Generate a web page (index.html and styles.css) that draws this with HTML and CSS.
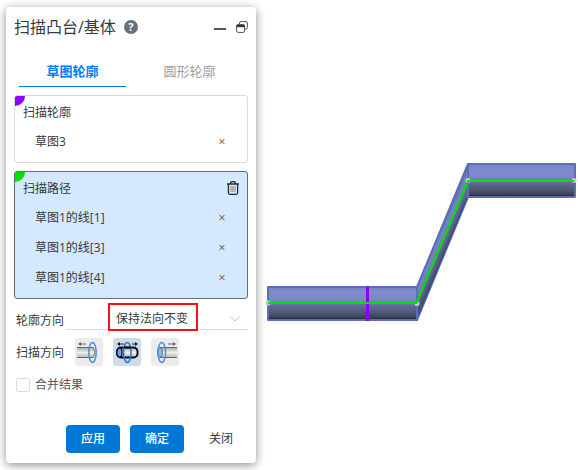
FILE: index.html
```html
<!DOCTYPE html>
<html lang="zh-CN">
<head>
  <meta charset="UTF-8">
  <title>扫描凸台/基体</title>
  <link rel="stylesheet" href="styles.css">
</head>
<body>
  <form class="panel">
    <header class="panel-header">
      <h1 class="panel-title">扫描凸台/基体</h1>
      <button type="button" class="icon-btn help" aria-label="帮助">?</button>
      <div class="window-actions">
        <button type="button" class="icon-btn" aria-label="最小化">
          <svg width="12" height="14" viewBox="0 0 12 14"><path d="M0 9H12" stroke="#555" stroke-width="2"/></svg>
        </button>
        <button type="button" class="icon-btn" aria-label="弹出">
          <svg width="12" height="12" viewBox="0 0 12 12" fill="none" stroke="#555">
            <path d="M3.5 3V2Q3.5 .6 5 .6H10Q11.4 .6 11.4 2V6.500Q11.4 8 10 8H9"/>
            <rect x=".6" y="3.600" width="8" height="7.800" rx="1.500"/>
            <path d="M.6 5H8.600" stroke="#333" stroke-width="2.400"/>
          </svg>
        </button>
      </div>
    </header>

    <div class="tabs">
      <button type="button" class="tab active">草图轮廓</button>
      <button type="button" class="tab">圆形轮廓</button>
    </div>

    <!-- Profile selection -->
    <section class="pick-box profile">
      <div class="pick-header"><h2 class="pick-title">扫描轮廓</h2></div>
      <ul class="pick-list">
        <li class="pick-item">草图3<button type="button" class="remove" aria-label="移除">×</button></li>
      </ul>
    </section>

    <!-- Path selection -->
    <section class="pick-box path active">
      <div class="pick-header">
        <h2 class="pick-title">扫描路径</h2>
        <button type="button" class="icon-btn" aria-label="清空">
          <svg width="12" height="14" viewBox="0 0 12 14" fill="none" stroke="#222b38" stroke-width="1.3">
            <path d="M0 3H12M3.6 3V1.8Q3.6 .7 4.7 .7H7.3Q8.4 .7 8.4 1.8V3M1.4 3V11.8Q1.4 13.3 2.9 13.3H9.1Q10.6 13.3 10.6 11.8V3"/>
            <path d="M4 5V11" stroke="#c79a5c"/><path d="M6 5V11" stroke="#6f9bd0"/><path d="M8 5V11" stroke="#c79a5c"/>
          </svg>
        </button>
      </div>
      <ul class="pick-list">
        <li class="pick-item">草图1的线[1]<button type="button" class="remove" aria-label="移除">×</button></li>
        <li class="pick-item">草图1的线[3]<button type="button" class="remove" aria-label="移除">×</button></li>
        <li class="pick-item">草图1的线[4]<button type="button" class="remove" aria-label="移除">×</button></li>
      </ul>
    </section>

    <div class="field">
      <label for="orientation">轮廓方向</label>
      <div class="select-wrap">
        <select id="orientation">
          <option>保持法向不变</option>
        </select>
        <svg class="chevron" width="10" height="6" viewBox="0 0 10 6"><path d="M.5 .5L5 5L9.5 .5" fill="none" stroke="#c0c4cc"/></svg>
        <span class="highlight"></span>
      </div>
    </div>

    <div class="field directions">
      <span>扫描方向</span>
      <div class="direction-group">
        <button type="button" class="direction" aria-label="反向">
          <svg width="28" height="28" viewBox="0 0 28 28" fill="none">
            <path d="M2 9.5H18.500Q21 14 18.500 19.500H2Z" fill="url(#tube)"/>
            <path d="M2 9.5H18M2 19.5H18" stroke="#666" stroke-width="1.200"/>
            <path d="M18.500 9.500Q21 14 18.500 19.500" stroke="#777"/>
            <ellipse cx="17.500" cy="14.500" rx="3.700" ry="10" stroke="#4b8fe0" stroke-width="1.500"/>
            <path d="M4 6H11" stroke="#777" stroke-width="1.200"/><path d="M3 6L6 4V8Z" fill="#666"/>
          </svg>
        </button>
        <button type="button" class="direction active" aria-label="双向">
          <svg width="28" height="28" viewBox="0 0 28 28" fill="none">
            <rect x="4" y="9.500" width="20.500" height="10" rx="4" fill="url(#tube)" stroke="#000" stroke-width="1.800"/>
            <ellipse cx="6.500" cy="14.500" rx="2.600" ry="4.700" fill="#64a8ef" stroke="#000" stroke-width="1.200"/>
            <ellipse cx="14.300" cy="14.500" rx="3.800" ry="10" stroke="#2c78cf" stroke-width="1.600"/>
            <path d="M11 9.500H18" stroke="#000" stroke-width="1.800"/>
            <path d="M5 6H11M19 6H24" stroke="#222"/>
            <path d="M4 6L7 4V8ZM25 6L22 4V8Z" fill="#111"/>
          </svg>
        </button>
        <button type="button" class="direction" aria-label="正向">
          <svg width="28" height="28" viewBox="0 0 28 28" fill="none">
            <path d="M9 9.500H26V19.500H9Z" fill="url(#tube)"/>
            <path d="M9 9.500H26M9 19.500H26" stroke="#666" stroke-width="1.200"/>
            <ellipse cx="9" cy="14.500" rx="2.400" ry="4.700" fill="#8bbdf0" stroke="#666"/>
            <ellipse cx="10.800" cy="14.500" rx="3.800" ry="10" stroke="#4b8fe0" stroke-width="1.500"/>
            <path d="M17 6H24" stroke="#777" stroke-width="1.200"/><path d="M25 6L22 4V8Z" fill="#666"/>
          </svg>
        </button>
      </div>
    </div>

    <div class="check-row">
      <input type="checkbox" id="merge">
      <label for="merge">合并结果</label>
    </div>

    <footer class="panel-footer">
      <button type="button" class="btn btn-primary">应用</button>
      <button type="button" class="btn btn-primary">确定</button>
      <button type="button" class="btn">关闭</button>
    </footer>
  </form>

  <!-- Model view -->
  <main class="viewport">
    <svg class="model" viewBox="0 0 322 470" role="img" aria-label="扫描预览">
      <defs>
        <linearGradient id="tube" x1="0" y1="0" x2="0" y2="1">
          <stop offset="0" stop-color="#aaa"/>
          <stop offset=".5" stop-color="#eee"/>
          <stop offset="1" stop-color="#bbb"/>
        </linearGradient>
        <linearGradient id="pipe" x1="0" y1="0" x2="0" y2="1">
          <stop offset="0" stop-color="#7482c4"/>
          <stop offset=".15" stop-color="#7f8bcc"/>
          <stop offset=".4" stop-color="#7b88c8"/>
          <stop offset=".55" stop-color="#626c9b"/>
          <stop offset=".8" stop-color="#50556e"/>
          <stop offset="1" stop-color="#30323e"/>
        </linearGradient>
        <linearGradient id="slope" gradientUnits="userSpaceOnUse" x1="174" y1="236" x2="199" y2="247">
          <stop offset="0" stop-color="#6c7cbb"/>
          <stop offset=".2" stop-color="#5668a8"/>
          <stop offset=".4" stop-color="#7887bd"/>
          <stop offset=".65" stop-color="#535b7c"/>
          <stop offset="1" stop-color="#262a3b"/>
        </linearGradient>
      </defs>
      <g stroke="#5a6fb9" stroke-width="2" stroke-linejoin="round">
        <path d="M161 287L212 164V197L161 320Z" fill="url(#slope)"/>
        <path d="M12 287H161V320H12Z" fill="url(#pipe)"/>
        <path d="M212 164H319V197H212Z" fill="url(#pipe)"/>
      </g>
      <g fill="none" stroke="#222a4a" opacity=".6">
        <path d="M13 318.500H160M213 195.500H318M162.500 315L211 198"/>
      </g>
      <path d="M111.500 286V321" stroke="#8b00ff" stroke-width="3"/>
      <g fill="#c8c8c8">
        <circle cx="12" cy="303" r="2.500"/><circle cx="161" cy="303.500" r="2.500"/>
        <circle cx="212" cy="180.500" r="2.500"/><circle cx="318" cy="180.500" r="2.500"/>
      </g>
      <path d="M12 303H160.500L212 181H318" fill="none" stroke="#00e010" stroke-width="2"/>
    </svg>
  </main>
</body>
</html>
```

FILE: styles.css
```css
* {
  margin: 0;
  padding: 0;
  box-sizing: border-box;
}

:root {
  --primary-color: #0078d7;
  --tab-color: #007bff;
  --text-color: #36383c;
  --muted-color: #a0a0a0;
  --border-color: #d9d9de;
  --active-bg: #d4e8ff;
}

body {
  display: flex;
  align-items: flex-start;
  background: #fff;
  color: var(--text-color);
  font-family: "Open Sans", "Noto Sans CJK SC", sans-serif;
  font-size: 12px;
  line-height: 18px;
}

button,
select {
  border: none;
  background: none;
  color: inherit;
  font: inherit;
  cursor: pointer;
}

svg {
  display: block;
}

/* Panel */
.panel {
  flex: none;
  width: 250px;
  margin: 7px 0 7px 6px;
  padding: 0 8px 10px;
  border-radius: 4px;
  background: #fff;
  box-shadow: 0 2px 10px rgba(0, 0, 0, 0.45);
}

.panel-header {
  display: flex;
  align-items: center;
  height: 40px;
}

.panel-title {
  font-size: 16px;
  font-weight: 400;
  line-height: 24px;
}

.icon-btn {
  display: flex;
  align-items: center;
  justify-content: center;
}

.help {
  width: 14px;
  height: 14px;
  margin-left: 8px;
  border-radius: 50%;
  background: #66717c;
  color: #fff;
  font-size: 11px;
  font-weight: 700;
  line-height: 14px;
}

.window-actions {
  display: flex;
  align-items: center;
  gap: 10px;
  margin-left: auto;
}

/* Tabs */
.tabs {
  display: flex;
  margin: 9px 0 8px;
}

.tab {
  flex: 1;
  height: 31px;
  margin: 0 5px;
  border-bottom: 1px solid transparent;
  color: var(--muted-color);
  font-size: 13px;
}

.tab.active {
  border-bottom: 1px solid var(--tab-color);
  color: var(--tab-color);
  font-weight: 700;
}

/* Selection boxes */
.pick-box {
  position: relative;
  margin-bottom: 8px;
  padding: 1px 8px 5px;
  border: 1px solid var(--border-color);
  border-radius: 3px;
  overflow: hidden;
}

.pick-box::before {
  content: "";
  position: absolute;
  top: 0;
  left: 0;
  width: 10px;
  height: 10px;
  border-bottom-right-radius: 10px;
}

.profile::before {
  background: #8b00ff;
}

.path::before {
  background: #00e000;
}

.pick-box.active {
  margin-bottom: 0;
  border-color: #666c75;
  background: var(--active-bg);
}

.pick-header,
.pick-item {
  display: flex;
  align-items: center;
  justify-content: space-between;
  height: 30px;
}

.pick-title {
  padding-top: 2px;
  font-size: 12px;
  font-weight: 400;
}

.pick-list {
  list-style: none;
}

.pick-item {
  padding: 0 12px;
}

.remove {
  width: 10px;
  color: #55585e;
}

/* Fields */
.field {
  display: flex;
  align-items: flex-end;
  padding-left: 2px;
}

.field > label,
.field > span {
  width: 50px;
}

.field > span {
  padding-top: 2px;
}

.select-wrap {
  position: relative;
  flex: 1;
}

.select-wrap select {
  display: block;
  width: 100%;
  height: 31px;
  padding: 10px 10px 0 0;
  border-bottom: 1px solid #d8dae4;
  appearance: none;
  text-align: center;
  text-align-last: center;
}

.chevron {
  position: absolute;
  top: 17px;
  right: 8px;
  pointer-events: none;
}

.highlight {
  position: absolute;
  top: 4px;
  left: 42px;
  width: 90px;
  height: 28px;
  border: 2px solid #f01414;
  pointer-events: none;
}

.directions {
  align-items: center;
  margin-top: 8px;
}

.direction-group {
  display: flex;
  gap: 10px;
  padding-left: 9px;
}

.direction {
  width: 28px;
  height: 28px;
  border-radius: 3px;
  background: #ececec;
}

.direction.active {
  background: #cddce8;
}

.check-row {
  display: flex;
  align-items: center;
  gap: 5px;
  margin-top: 10px;
  padding-left: 2px;
  color: #55585e;
}

.check-row input {
  width: 14px;
  height: 14px;
  border: 1px solid #d8dae4;
  border-radius: 2px;
  appearance: none;
}

/* Footer */
.panel-footer {
  display: flex;
  justify-content: flex-end;
  gap: 10px;
  margin-top: 31px;
}

.btn {
  width: 54px;
  height: 28px;
  border-radius: 4px;
}

.btn-primary {
  background: var(--primary-color);
  color: #fff;
  font-weight: 500;
}

/* Model view */
.viewport {
  flex: 1;
  min-width: 0;
}

.model {
  width: 100%;
  height: auto;
}
```
